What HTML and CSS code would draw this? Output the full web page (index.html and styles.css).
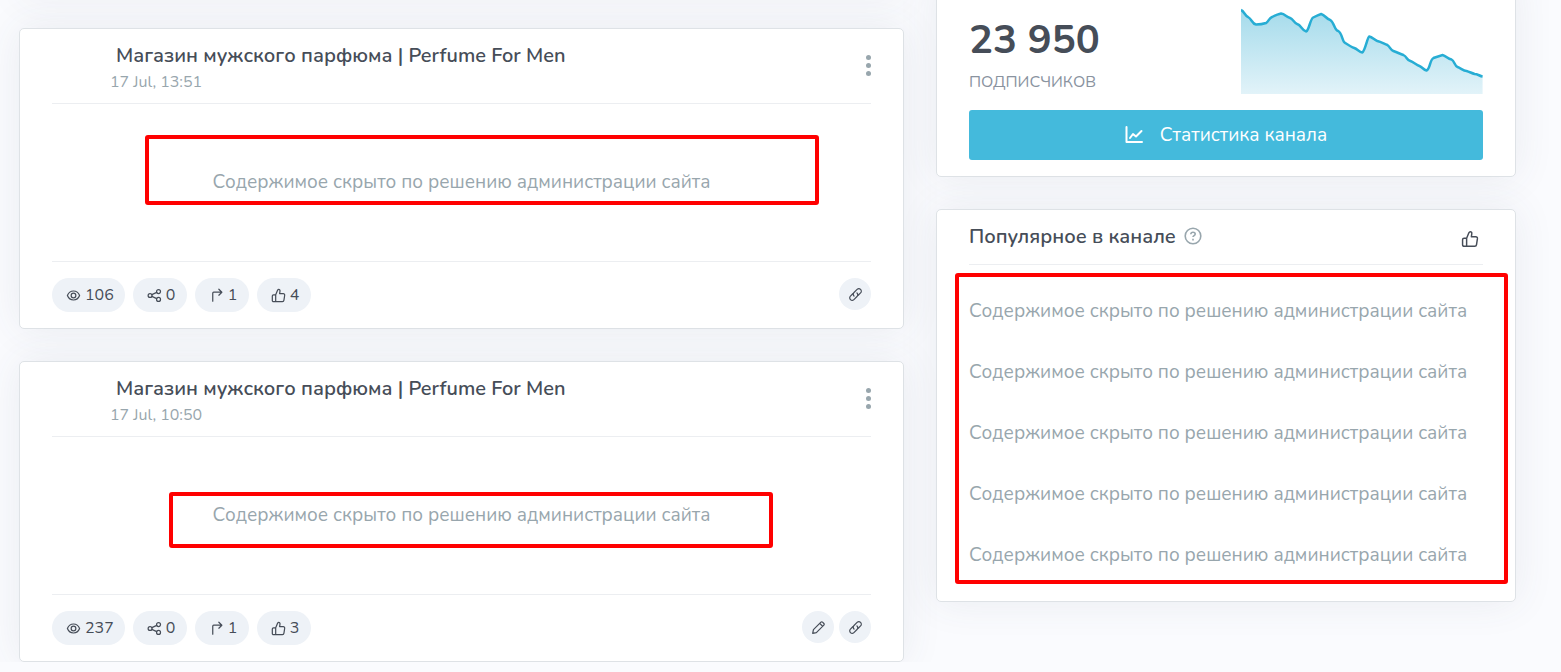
FILE: index.html
```html
<!DOCTYPE html>
<html lang="ru">
<head>
    <meta charset="UTF-8">
    <title>Perfume For Men</title>
    <link rel="stylesheet" href="styles.css">
</head>
<body>
    <!-- Иконки -->
    <svg class="sprite" aria-hidden="true">
        <symbol id="eye" viewBox="0 0 16 16"><path d="M1.500 8c1.200-3 3.600-4.800 6.500-4.800s5.300 1.800 6.500 4.800c-1.200 3-3.600 4.800-6.500 4.800S2.700 11 1.500 8z"/><circle cx="8" cy="8" r="2.500"/></symbol>
        <symbol id="share" viewBox="0 0 16 16"><circle cx="3.300" cy="8" r="2.100"/><circle cx="12.300" cy="3.800" r="2.100"/><circle cx="12.300" cy="12.200" r="2.100"/><path d="M5.200 7.100l5.200-2.400M5.200 8.900l5.200 2.400"/></symbol>
        <symbol id="forward" viewBox="0 0 16 16"><path d="M4 14V5.500Q4 4.500 5 4.500h8.500M10.500 1.300l3.200 3.200-3.200 3.200"/></symbol>
        <symbol id="like" viewBox="0 0 16 16"><path d="M5 7.300 7 2.500c.3-.6.600-1 1.200-1 1 0 1.500.8 1.400 1.700L9.200 6h3.900c1 0 1.600.8 1.500 1.700l-.8 5.300c-.1.900-.7 1.500-1.600 1.500H2.700c-.8 0-1.300-.5-1.300-1.300V8.600c0-.8.5-1.300 1.300-1.300H5zM5 7.300v7.200"/></symbol>
        <symbol id="link" viewBox="0 0 16 16"><path d="M6.400 9.600a2.600 2.600 0 0 1 0-3.700l3.300-3.300a2.600 2.600 0 0 1 3.700 3.700l-2.500 2.500M9.600 6.400a2.600 2.600 0 0 1 0 3.700l-3.300 3.300a2.600 2.600 0 0 1-3.700-3.700l2.500-2.500"/></symbol>
        <symbol id="pencil" viewBox="0 0 16 16"><path d="M1.800 14.200l.8-3.900 8-8c.5-.5 1.200-.5 1.700 0l1.400 1.400c.5.500.5 1.200 0 1.700l-8 8zM9.300 3.600l3.100 3.100"/></symbol>
        <symbol id="chart" viewBox="0 0 18 18"><path d="M1.500 1v15H17M5 12l3-4 3 2.500L16.500 5"/></symbol>
    </svg>

    <main class="page">
        <div class="column">
            <section class="card stub"></section>

            <article class="card post">
                <header class="post-header">
                    <div>
                        <h2 class="post-title">Магазин мужского парфюма | Perfume For Men</h2>
                        <time class="post-date">17 Jul, 13:51</time>
                    </div>
                    <button class="menu" type="button" aria-label="Меню"><i></i><i></i><i></i></button>
                </header>
                <p class="post-body">Содержимое скрыто по решению администрации сайта</p>
                <footer class="post-footer">
                    <span class="pill"><svg class="icon"><use href="#eye"/></svg>106</span>
                    <span class="pill"><svg class="icon"><use href="#share"/></svg>0</span>
                    <span class="pill"><svg class="icon"><use href="#forward"/></svg>1</span>
                    <span class="pill"><svg class="icon"><use href="#like"/></svg>4</span>
                    <div class="actions">
                        <button class="round" type="button" aria-label="Ссылка"><svg class="icon"><use href="#link"/></svg></button>
                    </div>
                </footer>
                <div class="mark mark-first"></div>
            </article>

            <article class="card post">
                <header class="post-header">
                    <div>
                        <h2 class="post-title">Магазин мужского парфюма | Perfume For Men</h2>
                        <time class="post-date">17 Jul, 10:50</time>
                    </div>
                    <button class="menu" type="button" aria-label="Меню"><i></i><i></i><i></i></button>
                </header>
                <p class="post-body">Содержимое скрыто по решению администрации сайта</p>
                <footer class="post-footer">
                    <span class="pill"><svg class="icon"><use href="#eye"/></svg>237</span>
                    <span class="pill"><svg class="icon"><use href="#share"/></svg>0</span>
                    <span class="pill"><svg class="icon"><use href="#forward"/></svg>1</span>
                    <span class="pill"><svg class="icon"><use href="#like"/></svg>3</span>
                    <div class="actions">
                        <button class="round" type="button" aria-label="Изменить"><svg class="icon"><use href="#pencil"/></svg></button>
                        <button class="round" type="button" aria-label="Ссылка"><svg class="icon"><use href="#link"/></svg></button>
                    </div>
                </footer>
                <div class="mark mark-second"></div>
            </article>
        </div>

        <aside class="column">
            <section class="card stats">
                <div class="stats-row">
                    <div>
                        <div class="count">23 950</div>
                        <div class="count-label">подписчиков</div>
                    </div>
                    <svg class="graph" viewBox="0 0 241 94" preserveAspectRatio="none">
                        <defs>
                            <linearGradient id="fill" x1="0" y1="0" x2="0" y2="1">
                                <stop offset="0" stop-color="#a5dbeb"/>
                                <stop offset="1" stop-color="#e2f3f9"/>
                            </linearGradient>
                        </defs>
                        <path fill="url(#fill)" d="M0 10C3 11 4 16 7 17C11 19 11 24 15 24.500C18 24.500 22 24 25 23C28 21 28 18 31 17C35 15 37 14 40 13.500C44 14 45 17 49 18C52 19 53 23 56 24C60 25 61 31 65 31.500C68 30 69 19 72 17.500C75 16 77 15 80 14C84 15 85 19 89 20C93 22 93 30 97 31C101 33 101 42 104 43C107 45 110 47 113 48C116 49 118 52 121 52.500C124 51 126 37 128 36.500C131 37 133 40 136 41C140 42 143 44 146 45C149 47 149 50 152 51C155 52 159 54 162 55C166 57 165 60 169 61C172 62 175 65 178 66C181 67 182 70 185 70.500C189 69 188 60 192 58C195 57 198 56 201 55C205 56 206 59 210 59.500C213 61 213 66 216 67C219 68 222 71 225 71C228 72 230 73 233 74C236 74 238 76 241 76.500V94H0z"/>
                        <path fill="none" stroke="#27add4" stroke-width="2.500" d="M0 10C3 11 4 16 7 17C11 19 11 24 15 24.500C18 24.500 22 24 25 23C28 21 28 18 31 17C35 15 37 14 40 13.500C44 14 45 17 49 18C52 19 53 23 56 24C60 25 61 31 65 31.500C68 30 69 19 72 17.500C75 16 77 15 80 14C84 15 85 19 89 20C93 22 93 30 97 31C101 33 101 42 104 43C107 45 110 47 113 48C116 49 118 52 121 52.500C124 51 126 37 128 36.500C131 37 133 40 136 41C140 42 143 44 146 45C149 47 149 50 152 51C155 52 159 54 162 55C166 57 165 60 169 61C172 62 175 65 178 66C181 67 182 70 185 70.500C189 69 188 60 192 58C195 57 198 56 201 55C205 56 206 59 210 59.500C213 61 213 66 216 67C219 68 222 71 225 71C228 72 230 73 233 74C236 74 238 76 241 76.500"/>
                    </svg>
                </div>
                <button class="stats-button" type="button"><svg class="icon icon-chart"><use href="#chart"/></svg>Статистика канала</button>
            </section>

            <section class="card popular">
                <header class="popular-header">
                    <h2 class="popular-title">Популярное в канале</h2>
                    <svg class="help" viewBox="0 0 18 18"><circle cx="9" cy="9" r="7.800"/><path d="M6.800 7.200c.1-1.300 1-2 2.200-2s2.200.8 2.200 1.900c0 1.500-2.200 1.600-2.200 3M9 11.800v1.600"/></svg>
                    <button class="like-button" type="button" aria-label="По реакциям"><svg class="icon icon-like"><use href="#like"/></svg></button>
                </header>
                <ul class="popular-list">
                    <li>Содержимое скрыто по решению администрации сайта</li>
                    <li>Содержимое скрыто по решению администрации сайта</li>
                    <li>Содержимое скрыто по решению администрации сайта</li>
                    <li>Содержимое скрыто по решению администрации сайта</li>
                    <li>Содержимое скрыто по решению администрации сайта</li>
                </ul>
                <div class="mark mark-list"></div>
            </section>
        </aside>
    </main>
</body>
</html>
```
FILE: styles.css
```css
* {
    box-sizing: border-box;
}

body {
    margin: 0;
    font-family: Nunito, "Open Sans", "Noto Sans", sans-serif;
    font-size: 19px;
    color: #464d58;
    background-color: #fafbfe;
}

h2, p, ul {
    margin: 0;
    padding: 0;
}

button {
    padding: 0;
    border: none;
    background: none;
    font-family: inherit;
    color: inherit;
    cursor: pointer;
}

.sprite {
    position: absolute;
    width: 0;
    height: 0;
}

.page {
    display: grid;
    grid-template-columns: 885fr 580fr;
    gap: 32px;
    align-items: start;
    margin-top: -24px;
    padding: 0 45px 0 19px;
}

.column {
    display: flex;
    flex-direction: column;
    gap: 32px;
}

.card {
    position: relative;
    padding: 0 32px;
    background-color: #fff;
    border: 1px solid #dee2e6;
    border-radius: 5px;
    box-shadow: 0 0 40px rgba(70, 77, 100, 0.09);
}

.stub {
    height: 20px;
}

/* Публикации */
.post-header {
    display: flex;
    justify-content: space-between;
    height: 75px;
    padding-top: 14px;
    border-bottom: 1px solid #eceef1;
}

.post-title {
    padding-left: 64px;
    font-size: 20px;
    font-weight: 600;
    line-height: 26px;
}

.post-date {
    display: block;
    padding-left: 58px;
    font-size: 16px;
    line-height: 26px;
    color: #98a6ad;
}

.menu {
    display: flex;
    flex-direction: column;
    gap: 3px;
    align-self: flex-start;
    padding-top: 12px;
}

.menu i {
    width: 5px;
    height: 5px;
    border-radius: 50%;
    background-color: #98a6ad;
}

.post-body {
    height: 157px;
    line-height: 156px;
    text-align: center;
    color: #98a6ad;
}

.post-footer {
    display: flex;
    gap: 8px;
    padding: 16px 0;
    border-top: 1px solid #eceef1;
}

.pill {
    display: flex;
    align-items: center;
    gap: 4px;
    min-width: 54px;
    height: 34px;
    padding: 0 11px 0 14px;
    border-radius: 17px;
    background-color: #eef2f7;
    font-size: 16px;
}

.icon {
    width: 15px;
    height: 15px;
    fill: none;
    stroke: currentColor;
    stroke-width: 1.3;
    stroke-linecap: round;
    stroke-linejoin: round;
}

.actions {
    display: flex;
    gap: 5px;
    margin-left: auto;
}

.round {
    display: flex;
    align-items: center;
    justify-content: center;
    width: 32px;
    height: 32px;
    border-radius: 50%;
    background-color: #eef2f7;
}

/* Подписчики */
.stats {
    padding-bottom: 16px;
}

.stats-row {
    display: flex;
    justify-content: space-between;
    padding-top: 23px;
    margin-bottom: 15px;
}

.count {
    padding-top: 16px;
    font-size: 40px;
    font-weight: 700;
    line-height: 48px;
}

.count-label {
    padding-top: 5px;
    font-size: 16px;
    line-height: 26px;
    color: #8a939f;
    text-transform: uppercase;
}

.graph {
    width: 47%;
    height: 94px;
}

.stats-button {
    display: flex;
    align-items: center;
    justify-content: center;
    gap: 17px;
    width: 100%;
    height: 50px;
    border-radius: 3px;
    background-color: #44badc;
    font-size: 19px;
    color: #fff;
}

.icon-chart {
    width: 18px;
    height: 18px;
    stroke-width: 2;
}

/* Популярное */
.popular-header {
    display: flex;
    align-items: center;
    height: 55px;
    padding-bottom: 2px;
    border-bottom: 1px solid #eceef1;
}

.popular-title {
    font-size: 20px;
    font-weight: 600;
}

.help {
    width: 18px;
    height: 18px;
    margin-left: 8px;
    fill: none;
    stroke: #98a6ad;
    stroke-width: 1.6;
}

.like-button {
    display: flex;
    margin-left: auto;
    padding: 6px 4px 0 0;
}

.icon-like {
    width: 18px;
    height: 18px;
}

.popular-list {
    padding: 16px 0 15px;
    list-style: none;
    color: #98a6ad;
}

.popular-list li {
    line-height: 61px;
    white-space: nowrap;
}

/* Красные рамки */
.mark {
    position: absolute;
    border: 4px solid #f00;
    border-radius: 3px;
    pointer-events: none;
}

.mark-first {
    top: 106px;
    left: 125px;
    right: 84px;
    height: 70px;
}

.mark-second {
    top: 130px;
    left: 149px;
    right: 130px;
    height: 56px;
}

.mark-list {
    top: 63px;
    left: 18px;
    right: 7px;
    bottom: 17px;
}
```
